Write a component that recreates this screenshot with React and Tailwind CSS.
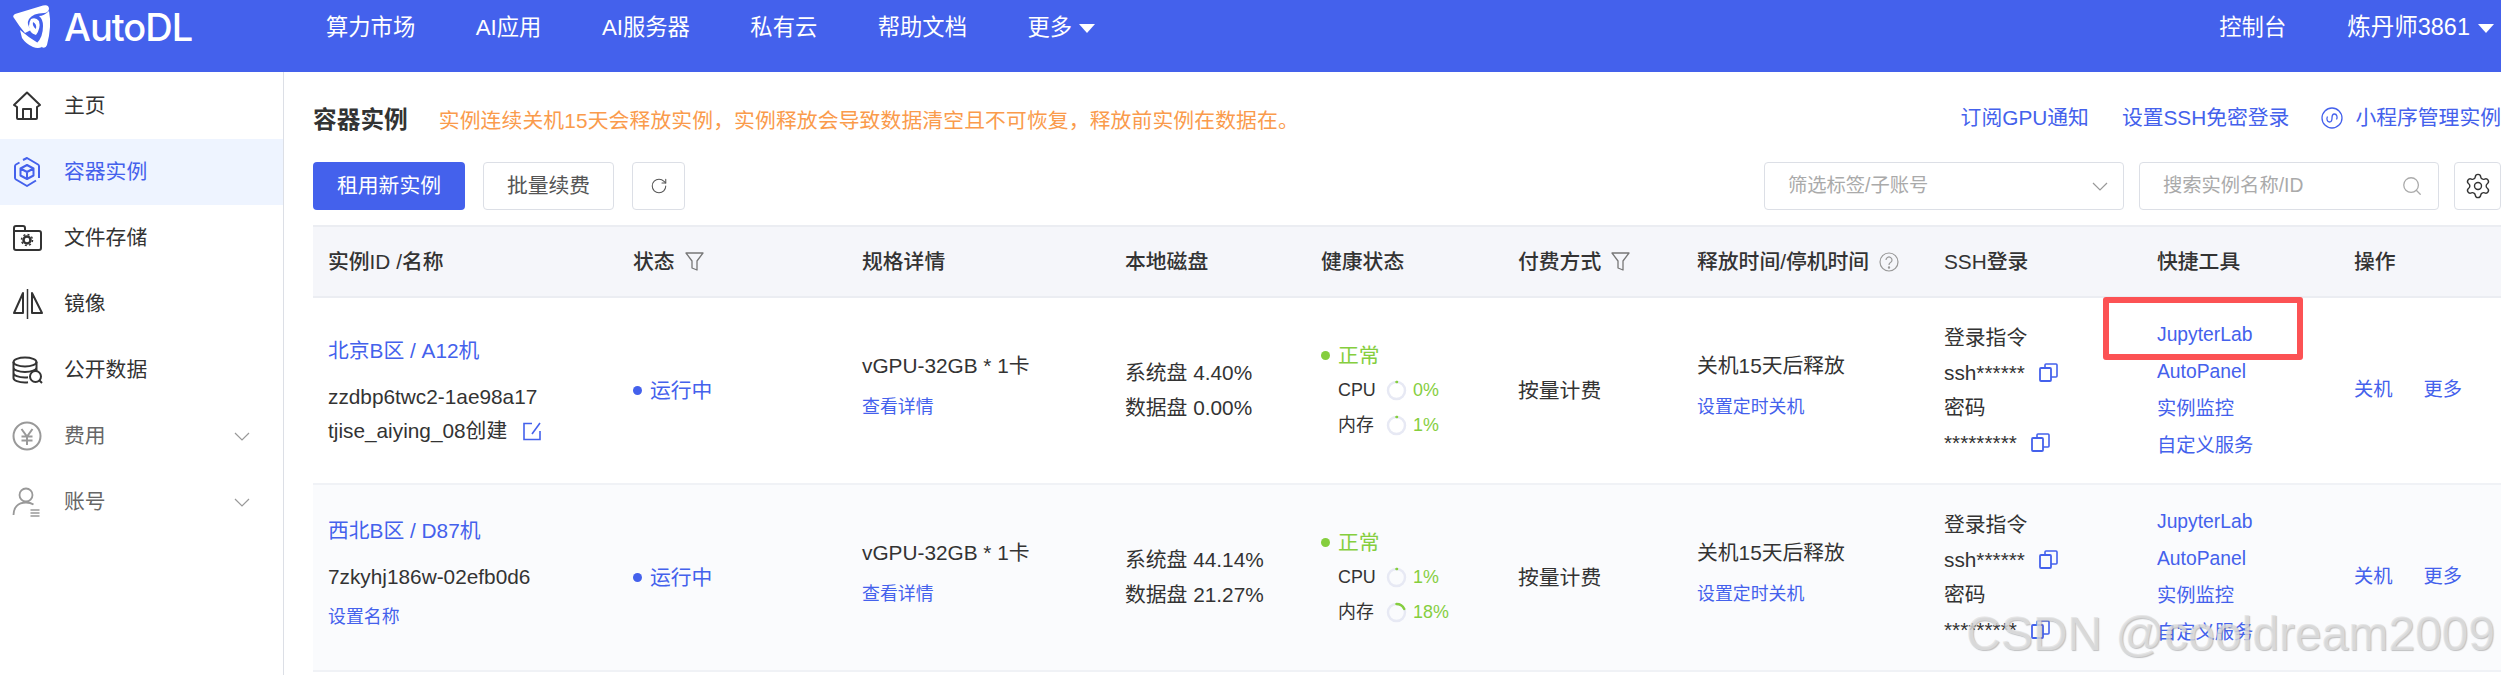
import React from "react";
import { RotateCw, Search, Settings } from "lucide-react";

const cols = "grid grid-cols-[305px_229px_263px_196px_197px_179px_247px_213px_197px_162px]";
const blue = "text-[#4461ec]";

const Caret = () => (
    <svg width="16" height="9" viewBox="0 0 16 9" className="shrink-0"><path d="M0 0h16L8 9z" fill="#fff" /></svg>
);

const Chevron = ({ className }) => (
    <svg width="16" height="9" viewBox="0 0 16 9" fill="none" stroke="currentColor" strokeWidth="1.2" className={className}><path d="M1 1l7 7 7-7" /></svg>
);

const Logo = () => (
    <svg width="40" height="46" viewBox="0 0 40 46" fill="#fff" className="shrink-0">
        <path d="M2 14Q0 12 3 10L31 1.5Q37 0 37 5Q36 9 32 9Q21 9 17 15Q14 20 19 26L13 29Q7 22 2 14Z" />
        <path d="M37 7Q40 22 35 41Q33 46 28 42L25 39Q31 33 31 22Q31 15 27 12Q32 12 37 7Z" />
        <path d="M8 26Q16 33 26 39L30 43Q26 45 21 43Q14 40 10 34Z" />
        <path d="M19 15Q24 13 27 17Q29 24 24 31Q17 29 17 22Q17 18 19 15ZM21 18Q20 22 24 25Q25 20 21 18Z" />
    </svg>
);

const HomeIcon = () => (
    <svg width="30" height="30" viewBox="0 0 30 30" fill="none" stroke="#333" strokeWidth="2" strokeLinejoin="round"><path d="M2 14L15 1.5 28 14l-3 2V27a1 1 0 0 1-1 1H6a1 1 0 0 1-1-1V16z" /><path d="M11 28V18h8v10" /></svg>
);

const BoxIcon = () => (
    <svg width="30" height="30" viewBox="0 0 30 30" fill="none" stroke="#4461ec" strokeWidth="2" strokeLinejoin="round">
        <path d="M11 3l4-2 11 6.500a2 2 0 0 1 1 1.500v12M24 23.500L15 29 4 22.500a2 2 0 0 1-1-1.500V9a2 2 0 0 1 1-1.500l3.500-2" />
        <path d="M15 8l6.500 3.500v7L15 22l-6.500-3.500v-7zM8.500 11.500L15 15l6.500-3.500M15 15v7" />
    </svg>
);

const FolderIcon = () => (
    <svg width="30" height="28" viewBox="0 0 30 28" fill="none" stroke="#333" strokeWidth="2"><path d="M2 24V4a2 2 0 0 1 2-2h7a2 2 0 0 1 2 2v3h14a2 2 0 0 1 2 2v15a2 2 0 0 1-2 2H4a2 2 0 0 1-2-2zM2 7h11" /><circle cx="15" cy="16" r="3.500" strokeWidth="2.500" /><circle cx="15" cy="16" r="5.500" strokeWidth="1.500" strokeDasharray="2 2.300" /></svg>
);

const MirrorIcon = () => (
    <svg width="32" height="30" viewBox="0 0 32 30" fill="none" stroke="#333" strokeWidth="2" strokeLinejoin="round"><path d="M15.500 0v30" strokeWidth="1.500" /><path d="M11 4L2 24h9zM20 4l10 20H20z" /></svg>
);

const DataIcon = () => (
    <svg width="31" height="28" viewBox="0 0 31 28" fill="none" stroke="#333" strokeWidth="2"><ellipse cx="13" cy="6" rx="11.500" ry="4.500" /><path d="M1.500 6v16c0 2.500 5 4.500 11.500 4.500 1 0 2 0 3-.2M24.500 6v10M1.500 11.500c0 2.500 5 4.500 11.500 4.500s11.500-2 11.500-4.500M1.500 17c0 2.500 5 4.500 11.500 4.500 1 0 2 0 3-.2" /><circle cx="23.500" cy="20.500" r="5.500" /><path d="M27.500 24.500l2.500 2.500" /></svg>
);

const YenIcon = () => (
    <svg width="30" height="30" viewBox="0 0 30 30" fill="none" stroke="#999" strokeWidth="2"><circle cx="15" cy="15" r="13.500" /><path d="M9.500 8l5.500 7.500L20.500 8M9.500 15.500h11M9.500 19.500h11M15 15.500V24" /></svg>
);

const UserIcon = () => (
    <svg width="30" height="30" viewBox="0 0 30 30" fill="none" stroke="#999" strokeWidth="1.800"><circle cx="14" cy="8" r="6.500" /><path d="M1.500 28c0-7 4-12.500 12.500-12.500 3 0 5.500.7 7.500 2" /><path d="M18.500 23h9M18.500 26h9M18.500 29h9" strokeWidth="1.400" /></svg>
);

const FilterIcon = () => (
    <svg width="19" height="19" viewBox="0 0 19 19" fill="none" stroke="#777" strokeWidth="1.300" strokeLinejoin="round" className="shrink-0"><path d="M1 1h17l-6 8v9l-5-2V9z" /></svg>
);

const HelpIcon = () => (
    <svg width="20" height="20" viewBox="0 0 20 20" fill="none" stroke="#999" strokeWidth="1.200" className="shrink-0"><circle cx="10" cy="10" r="9" /><path d="M7 8a3 3 0 1 1 4.500 2.600c-1 .6-1.500 1-1.500 2.400" /><circle cx="10" cy="15.500" r=".6" fill="#999" /></svg>
);

const MiniIcon = () => (
    <svg width="22" height="22" viewBox="0 0 22 22" fill="none" stroke="#4461ec" strokeWidth="1.300" className="shrink-0"><circle cx="11" cy="11" r="10" /><path d="M6.500 9.500c-1.200 2-.5 5.500 2 5.500 2 0 2.500-1.500 2.500-4s.5-4 2.500-4c2.500 0 3.200 3.500 2 5.500" /></svg>
);

const EditIcon = () => (
    <svg width="19" height="19" viewBox="0 0 19 19" fill="none" stroke="#4461ec" strokeWidth="1.600" className="shrink-0"><path d="M9 1.500H1v16h16V9" /><path d="M17 1L9 12" /></svg>
);

const CopyIcon = () => (
    <svg width="19" height="19" viewBox="0 0 19 19" fill="none" stroke="#4461ec" strokeWidth="1.600" className="shrink-0"><rect x="1" y="5" width="11" height="13" rx="1" strokeWidth="1.800" /><path d="M6 5V2a1 1 0 0 1 1-1h10a1 1 0 0 1 1 1v11a1 1 0 0 1-1 1h-5" /></svg>
);

// circular percent, starts from 12 o'clock
const Ring = ({ value }) => {
    const c = 2 * Math.PI * 8.5;
    const len = Math.max(value / 100, 0.01) * c;
    return (
        <svg width="21" height="21" viewBox="0 0 21 21" fill="none" strokeWidth="2.500" className="shrink-0 -rotate-90">
            <circle cx="10.500" cy="10.500" r="8.500" stroke="#e7e9f4" />
            <circle cx="10.500" cy="10.500" r="8.500" stroke="#85ce3e" strokeLinecap="round" strokeDasharray={`${len} ${c}`} />
        </svg>
    );
};

const menu = [
    { icon: <HomeIcon />, label: "主页" },
    { icon: <BoxIcon />, label: "容器实例", active: true },
    { icon: <FolderIcon />, label: "文件存储" },
    { icon: <MirrorIcon />, label: "镜像" },
    { icon: <DataIcon />, label: "公开数据" },
    { icon: <YenIcon />, label: "费用", sub: true },
    { icon: <UserIcon />, label: "账号", sub: true },
];

const rows = [
    { area: "北京B区 / A12机", id: "zzdbp6twc2-1ae98a17", owner: "tjise_aiying_08创建", disk: ["系统盘 4.40%", "数据盘 0.00%"], cpu: 0, mem: 1 },
    { area: "西北B区 / D87机", id: "7zkyhj186w-02efb0d6", disk: ["系统盘 44.14%", "数据盘 21.27%"], cpu: 1, mem: 18, alt: true },
];

const Head = ({ children, icon }) => (
    <div className="flex items-center gap-[10px] pl-[15px]">
        <span className="font-medium whitespace-nowrap">{children}</span>
        {icon}
    </div>
);

const Row = ({ row }) => (
    <div className={`${cols} h-[187px] border-b-2 border-[#f0f2f6] ${row.alt ? "bg-[#fafbfd]" : "bg-white"}`}>
        <div className={`pl-[15px] ${row.alt ? "pt-[31px]" : "pt-[38px]"}`}>
            <div className={`leading-[30px] ${blue}`}>{row.area}</div>
            <div className="leading-[30px] mt-[16px]">{row.id}</div>
            {row.owner ? (
                <div className="flex items-center gap-[16px] leading-[30px] mt-[4px]">{row.owner}<EditIcon /></div>
            ) : (
                <div className={`leading-[30px] mt-[10px] text-[17.9px] ${blue}`}>设置名称</div>
            )}
        </div>
        <div className="flex items-center gap-[8px] pl-[15px]">
            <span className="size-[9px] rounded-full bg-[#4461ec]"></span>
            <span className={blue}>运行中</span>
        </div>
        <div className="pl-[15px] pt-[53px]">
            <div className="leading-[30px]">vGPU-32GB * 1卡</div>
            <div className={`leading-[30px] mt-[11px] text-[17.9px] ${blue}`}>查看详情</div>
        </div>
        <div className="pl-[15px] pt-[57px] leading-[35px]">
            {row.disk.map((d) => <div key={d}>{d}</div>)}
        </div>
        <div className="pl-[15px] pt-[40px] leading-[35px]">
            <div className="flex items-center gap-[8px] text-[#85ce3e]">
                <span className="size-[9px] rounded-full bg-[#85ce3e]"></span>正常
            </div>
            <div className="flex items-center pl-[17px] text-[17.9px]">
                <span className="w-[48px]">CPU</span><Ring value={row.cpu} /><span className="ml-[6px] text-[#85ce3e]">{row.cpu}%</span>
            </div>
            <div className="flex items-center pl-[17px] text-[17.9px]">
                <span className="w-[48px]">内存</span><Ring value={row.mem} /><span className="ml-[6px] text-[#85ce3e]">{row.mem}%</span>
            </div>
        </div>
        <div className="flex items-center pl-[15px]">按量计费</div>
        <div className="pl-[15px] pt-[53px]">
            <div className="leading-[30px]">关机15天后释放</div>
            <div className={`leading-[30px] mt-[11px] text-[17.9px] ${blue}`}>设置定时关机</div>
        </div>
        <div className="pl-[15px] pt-[22px] leading-[35px]">
            <div>登录指令</div>
            <div className="flex items-center gap-[14px]">ssh******<CopyIcon /></div>
            <div>密码</div>
            <div className="flex items-center gap-[14px]">*********<CopyIcon /></div>
        </div>
        <div className={`pl-[15px] pt-[18px] leading-[37px] text-[19.3px] ${blue}`}>
            <div>JupyterLab</div>
            <div>AutoPanel</div>
            <div>实例监控</div>
            <div>自定义服务</div>
        </div>
        <div className={`flex items-center gap-[31px] pl-[15px] text-[19.3px] ${blue}`}>
            <span>关机</span><span>更多</span>
        </div>
    </div>
);

const App = () => {
    return (
        <div className="relative h-[675px] w-[2501px] overflow-hidden bg-white text-[20.8px] text-[#333] font-['Liberation_Sans','Noto_Sans_CJK_SC',sans-serif]">
            <header className="flex h-[72px] items-start bg-[#4461ec] pl-[12px] pr-[7px] text-white">
                <div className="flex h-[54px] w-[314px] items-center gap-[12px]">
                    <Logo />
                    <span className="text-[38px] font-medium tracking-[-1px] font-['Inter',sans-serif]">AutoDL</span>
                </div>
                <nav className="flex h-[56px] items-center gap-[60.5px] text-[22.3px]">
                    <span>算力市场</span>
                    <span>AI应用</span>
                    <span>AI服务器</span>
                    <span>私有云</span>
                    <span>帮助文档</span>
                    <span className="flex items-center gap-[7px]">更多<Caret /></span>
                </nav>
                <div className="ml-auto flex h-[56px] items-center gap-[61px] text-[22.3px]">
                    <span>控制台</span>
                    <span className="flex items-center gap-[8px] text-[23.5px]">炼丹师3861<Caret /></span>
                </div>
            </header>

            <div className="flex">
                <aside className="h-[603px] w-[284px] shrink-0 border-r border-[#dcdfe6] pt-[1px]">
                    <ul>
                        {menu.map((m) => (
                            <li key={m.label} className={`flex h-[66px] items-center pl-[12px] ${m.active ? "bg-[#eef4ff] text-[#4461ec]" : ""} ${m.sub ? "text-[#666]" : ""}`}>
                                <span className="flex w-[52px] shrink-0">{m.icon}</span>
                                <span>{m.label}</span>
                                {m.sub && <Chevron className="ml-auto mr-[33px] text-[#999]" />}
                            </li>
                        ))}
                    </ul>
                </aside>

                <main className="min-w-0 flex-1 pl-[29px]">
                    <div className="mt-[34px] flex h-[30px] items-center">
                        <h2 className="text-[23.7px] font-bold">容器实例</h2>
                        <span className="ml-[31px] tracking-[0.12px] text-[#fa9b4c]">实例连续关机15天会释放实例，实例释放会导致数据清空且不可恢复，释放前实例在数据在。</span>
                        <div className={`mb-[6px] ml-auto flex items-center ${blue}`}>
                            <span>订阅GPU通知</span>
                            <span className="ml-[33px]">设置SSH免密登录</span>
                            <span className="ml-[32px] flex items-center gap-[12px] whitespace-nowrap"><MiniIcon />小程序管理实例</span>
                        </div>
                    </div>

                    <div className="mt-[26px] flex h-[48px] items-stretch">
                        <button className="w-[152px] rounded-[4px] bg-[#4461ec] text-white">租用新实例</button>
                        <button className="ml-[18px] w-[131px] rounded-[4px] border border-[#dcdfe6] text-[#555]">批量续费</button>
                        <button className="ml-[18px] flex w-[53px] items-center justify-center rounded-[4px] border border-[#dcdfe6] text-[#555]"><RotateCw size={18} strokeWidth={1.4} /></button>
                        <div className="ml-auto flex w-[360px] items-center justify-between rounded-[4px] border border-[#dcdfe6] pl-[23px] pr-[15px] text-[19.3px] text-[#aaa]">
                            <span>筛选标签/子账号</span>
                            <Chevron className="text-[#999]" />
                        </div>
                        <div className="ml-[15px] flex w-[300px] items-center justify-between rounded-[4px] border border-[#dcdfe6] pl-[23px] pr-[15px] text-[19.3px] text-[#aaa]">
                            <span>搜索实例名称/ID</span>
                            <Search size={22} strokeWidth={1.4} />
                        </div>
                        <div className="ml-[15px] flex w-[47px] items-center justify-center rounded-[4px] border border-[#dcdfe6]"><Settings size={28} strokeWidth={1.2} /></div>
                    </div>

                    <div className="mt-[15px] w-[2188px]">
                        <div className={`${cols} h-[73px] border-y-2 border-[#ebedf2] bg-[#f5f6fa]`}>
                            <Head>实例ID /名称</Head>
                            <Head icon={<FilterIcon />}>状态</Head>
                            <Head>规格详情</Head>
                            <Head>本地磁盘</Head>
                            <Head>健康状态</Head>
                            <Head icon={<FilterIcon />}>付费方式</Head>
                            <Head icon={<HelpIcon />}>释放时间/停机时间</Head>
                            <Head>SSH登录</Head>
                            <Head>快捷工具</Head>
                            <Head>操作</Head>
                        </div>
                        {rows.map((r) => <Row key={r.id} row={r} />)}
                    </div>
                </main>
            </div>

            {/* annotation and watermark sit on top of the screenshot */}
            <div className="absolute left-[2103px] top-[297px] h-[63px] w-[200px] rounded-[3px] border-[6px] border-[#fc5254]"></div>
            <div className="pointer-events-none absolute left-[1966px] top-[610px] whitespace-nowrap text-[48px] leading-none text-[rgba(225,225,225,0.75)] [text-shadow:1px_1px_1px_rgba(120,120,120,0.45)]">CSDN @cooldream2009</div>
        </div>
    );
};

export default App;
